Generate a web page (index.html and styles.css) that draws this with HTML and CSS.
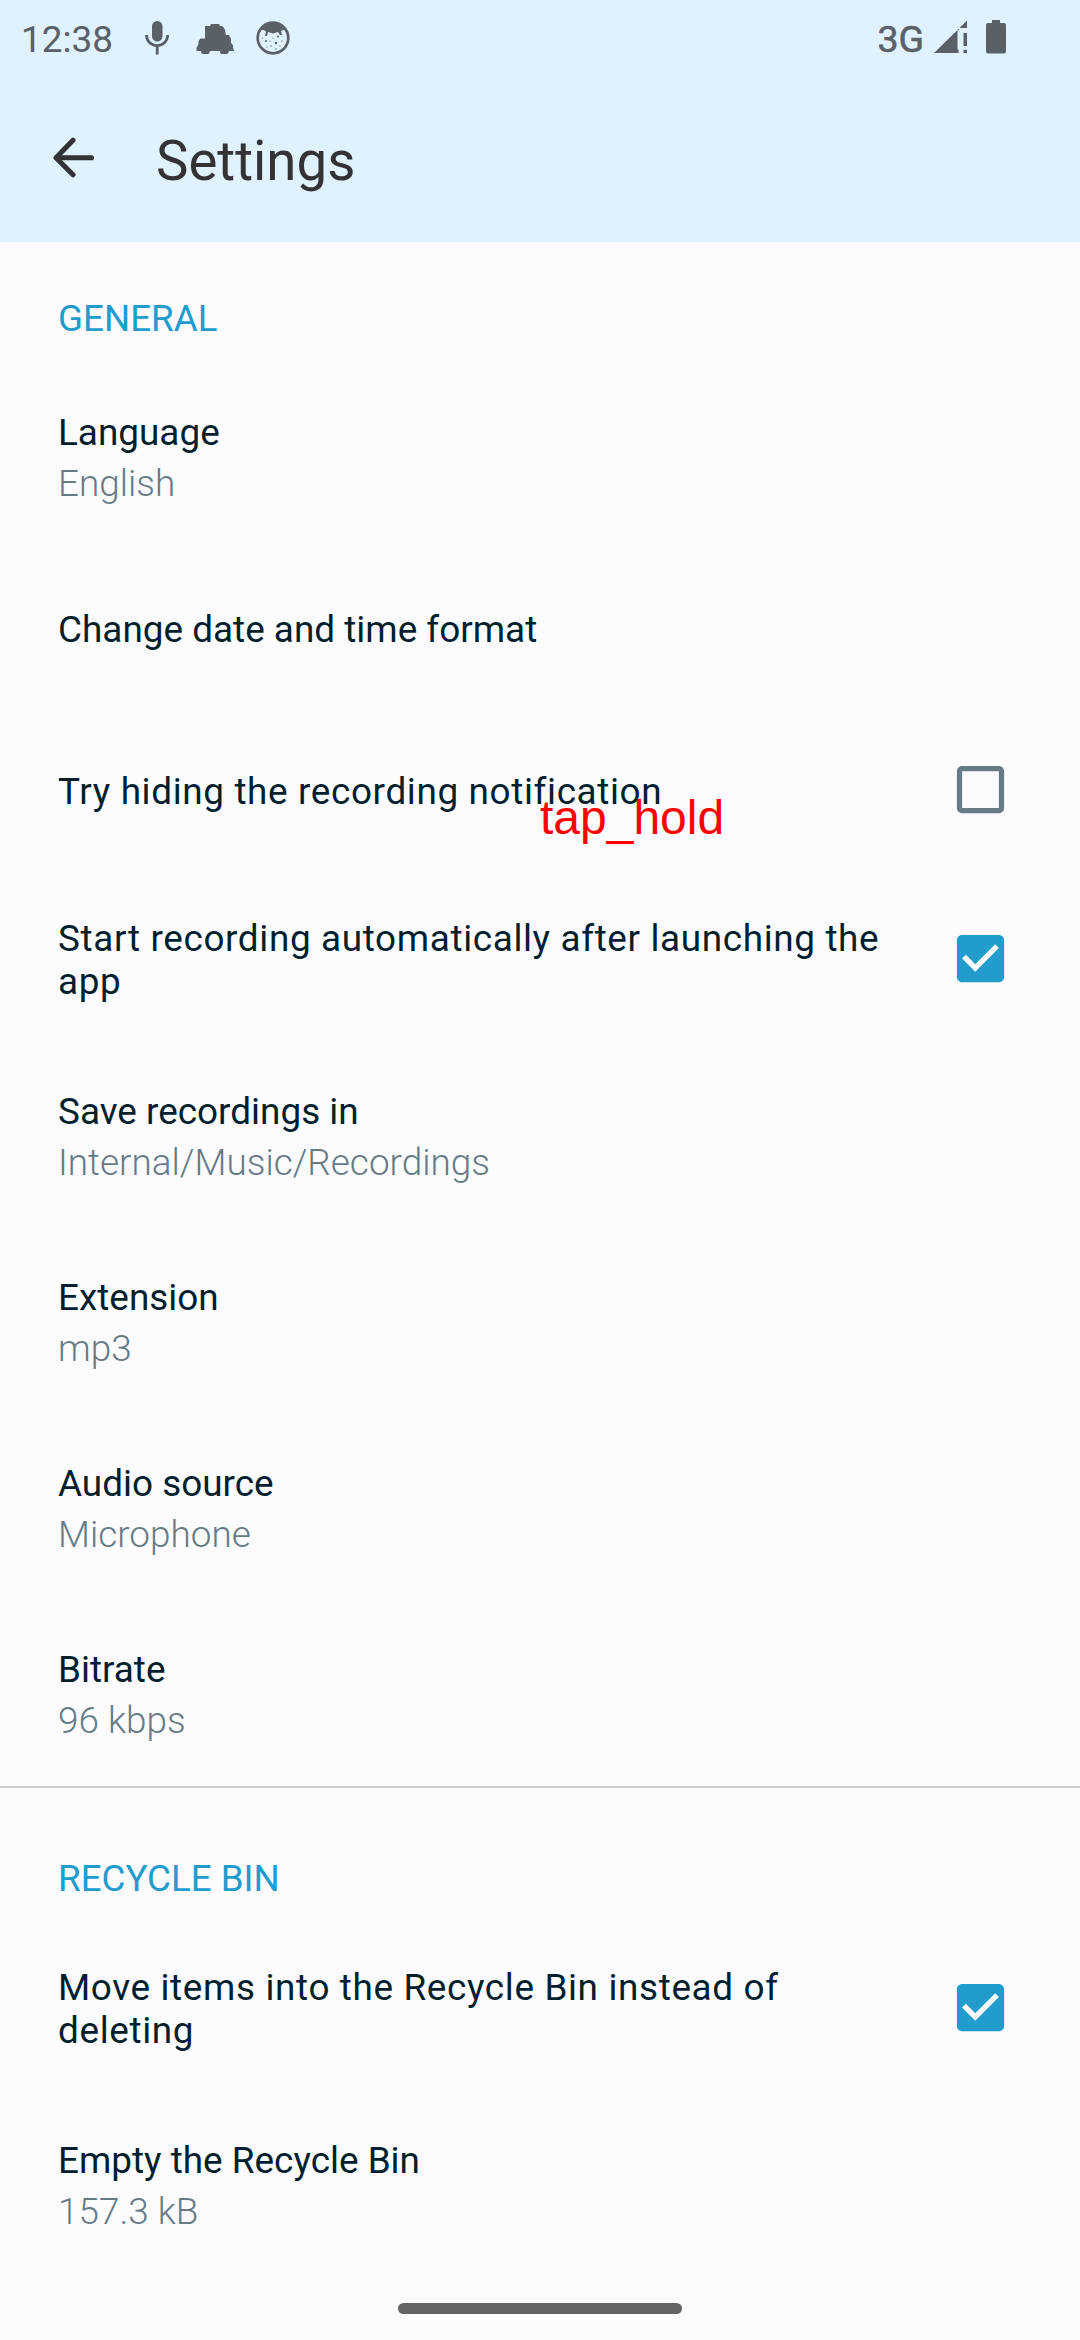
FILE: index.html
```html
<!DOCTYPE html>
<html lang="en">
<head>
<meta charset="utf-8">
<title>Settings</title>
<link rel="stylesheet" href="styles.css">
</head>
<body>
<div class="screen">
  <header class="header">
    <div class="status">
      <span class="clock">12:38</span>
      <svg class="mic" width="24" height="34" viewBox="0 0 24 34"><rect x="7" y="0" width="10.5" height="20.500" rx="5.200" fill="currentColor"/><path d="M1.500 14c0 6 4.600 10.600 10.600 10.600S22.700 20 22.700 14M12.200 25v8.500" fill="none" stroke="currentColor" stroke-width="2.800"/></svg>
      <svg class="car" width="38" height="31" viewBox="0 0 38 31"><path d="M9 3h5l1-2h8l1 2h2l2 2 1 2 1 5h3l2 4v4l2 2v3l1 2v1h-5a4.700 4.700 0 0 1-9 1v-1H14a4.700 4.700 0 0 1-9 1v-1H.5v-3l2-4v-3l2-2.500H9z" fill="currentColor"/></svg>
      <svg class="face" width="34" height="34" viewBox="0 0 34 34"><circle cx="17" cy="17" r="15.300" fill="none" stroke="currentColor" stroke-width="2.700"/><path d="M4 8C8 2 13 1 17 1s9 1 13 7l-5 2 1 4h-2l-2-3-5 1.500-5-1.500-1 4H9l1-5z" fill="currentColor"/><g fill="currentColor"><circle cx="10" cy="20" r="1"/><circle cx="20" cy="22" r="1.200"/><circle cx="22" cy="15.500" r="1"/><circle cx="15" cy="25" r=".7"/><circle cx="17" cy="17" r=".6"/><circle cx="26" cy="20" r=".7"/><circle cx="11" cy="26" r=".6"/><circle cx="14" cy="20" r=".6"/><circle cx="20" cy="28" r=".7"/><circle cx="24" cy="25" r=".6"/><circle cx="6.500" cy="17" r=".6"/></g></svg>
      <span class="network">3G</span>
      <svg class="signal" width="33" height="34" viewBox="0 0 33 34"><path d="M0 33L25 8.500V10h-1.500v19.500h1V33zM25.500 8L33 .5V8zM29.500 13H33v13h-3.500zM29.500 29.700H33V33h-3.500z" fill="currentColor"/></svg>
      <svg class="battery" width="20" height="34" viewBox="0 0 20 34"><path d="M6 0h8v3h4q2 0 2 2v26.500q0 2-2 2H2q-2 0-2-2V5q0-2 2-2h4z" fill="currentColor"/></svg>
    </div>
    <div class="toolbar">
      <svg class="back" width="42" height="42" viewBox="0 0 42 42"><path d="M38.500 20.700H3.500M20 3.300L3 20.700l17 17" fill="none" stroke="currentColor" stroke-width="5.100" stroke-linecap="round" stroke-linejoin="round"/></svg>
      <h1 class="title">Settings</h1>
    </div>
  </header>
  <main>
    <section class="section general">
      <h2 class="label">GENERAL</h2>
      <div class="row"><div class="name">Language</div><div class="value">English</div></div>
      <div class="row single"><div class="name">Change date and time format</div></div>
      <div class="row check one">
        <div class="name">Try hiding the recording notification<span class="gesture">tap_hold</span></div>
        <svg class="box off" viewBox="0 0 24 24"><path fill="currentColor" d="M19 5v14H5V5h14m0-2H5c-1.100 0-2 .9-2 2v14c0 1.100.9 2 2 2h14c1.100 0 2-.9 2-2V5c0-1.100-.9-2-2-2z"/></svg>
      </div>
      <div class="row check">
        <div class="name">Start recording automatically after launching the app</div>
        <svg class="box" viewBox="0 0 24 24"><path fill="currentColor" d="M19 3H5c-1.110 0-2 .9-2 2v14c0 1.100.89 2 2 2h14c1.110 0 2-.9 2-2V5c0-1.100-.89-2-2-2zm-9 14l-5-5 1.410-1.410L10 14.170l7.590-7.590L19 8l-9 9z"/></svg>
      </div>
      <div class="row"><div class="name">Save recordings in</div><div class="value">Internal/Music/Recordings</div></div>
      <div class="row"><div class="name">Extension</div><div class="value">mp3</div></div>
      <div class="row"><div class="name">Audio source</div><div class="value">Microphone</div></div>
      <div class="row last"><div class="name">Bitrate</div><div class="value">96 kbps</div></div>
    </section>
    <section class="section recycle">
      <h2 class="label">RECYCLE BIN</h2>
      <div class="row check">
        <div class="name">Move items into the Recycle Bin instead of deleting</div>
        <svg class="box" viewBox="0 0 24 24"><path fill="currentColor" d="M19 3H5c-1.110 0-2 .9-2 2v14c0 1.100.89 2 2 2h14c1.110 0 2-.9 2-2V5c0-1.100-.89-2-2-2zm-9 14l-5-5 1.410-1.410L10 14.170l7.590-7.590L19 8l-9 9z"/></svg>
      </div>
      <div class="row"><div class="name">Empty the Recycle Bin</div><div class="value">157.3 kB</div></div>
    </section>
  </main>
  <div class="home"></div>
</div>
</body>
</html>
```
FILE: styles.css
```css
* { box-sizing: border-box; }
body {
  margin: 0;
  background: #fcfcff;
  color: #001f2d;
  font: 400 36.9px/43px Roboto, sans-serif;
}
.screen {
  width: 1080px;
  height: 2340px;
  overflow: hidden;
  display: flex;
  flex-direction: column;
}
.header { height: 242px; background: #e0f2ff; flex: none; }
.status {
  height: 80px;
  padding: 18px 74px 0 21px;
  display: flex;
  align-items: flex-start;
  color: #596167;
}
.status svg { flex: none; }
.clock { width: 124px; }
.mic { margin-top: 3px; }
.car { margin: 5px 0 0 27px; }
.face { margin: 3px 0 0 22px; }
.network {
  margin-left: auto;
  font-size: 37.5px;
  -webkit-text-stroke: 0.6px currentColor;
}
.signal { margin: 2px 0 0 10px; }
.battery { margin: 2px 0 0 19px; }
.toolbar {
  height: 162px;
  padding: 57px 0 0 53px;
  display: flex;
  align-items: flex-start;
  color: #333;
}
.title { margin: -7px 0 0 61px; font-size: 54.6px; line-height: 62px; font-weight: 400; }
.label { margin: 0; padding: 0 58px; font-size: 36.75px; font-weight: 400; color: #229bcd; }
.general { padding-top: 55px; border-bottom: 2px solid #d0d0d3; }
.general .label { margin-bottom: 25px; }
.recycle { padding-top: 69px; }
.recycle .label { margin-bottom: 20px; }
.row { padding: 46px 58px; }
.value { margin-top: 8px; font-weight: 300; color: #667b86; }
.single { padding: 57px 58px; }
.check {
  padding: 46px 68px 41px 58px;
  display: flex;
  justify-content: space-between;
}
.check .name { width: 850px; position: relative; letter-spacing: 0.0172em; }
.one { padding: 62px 68px 58px 58px; }
.box { width: 63px; height: 63px; flex: none; align-self: center; margin: -14px 0 -10px; color: #229bcd; }
.off { color: #667b86; }
.gesture {
  position: absolute;
  left: 482px;
  top: 20px;
  font: 48px/55px "Liberation Sans", Arial, sans-serif;
  letter-spacing: 0;
  color: #f00;
}
.last { padding-bottom: 44px; }
.home {
  width: 284px;
  height: 11px;
  margin: auto auto 26px;
  border-radius: 6px;
  background: #646464;
}
```
